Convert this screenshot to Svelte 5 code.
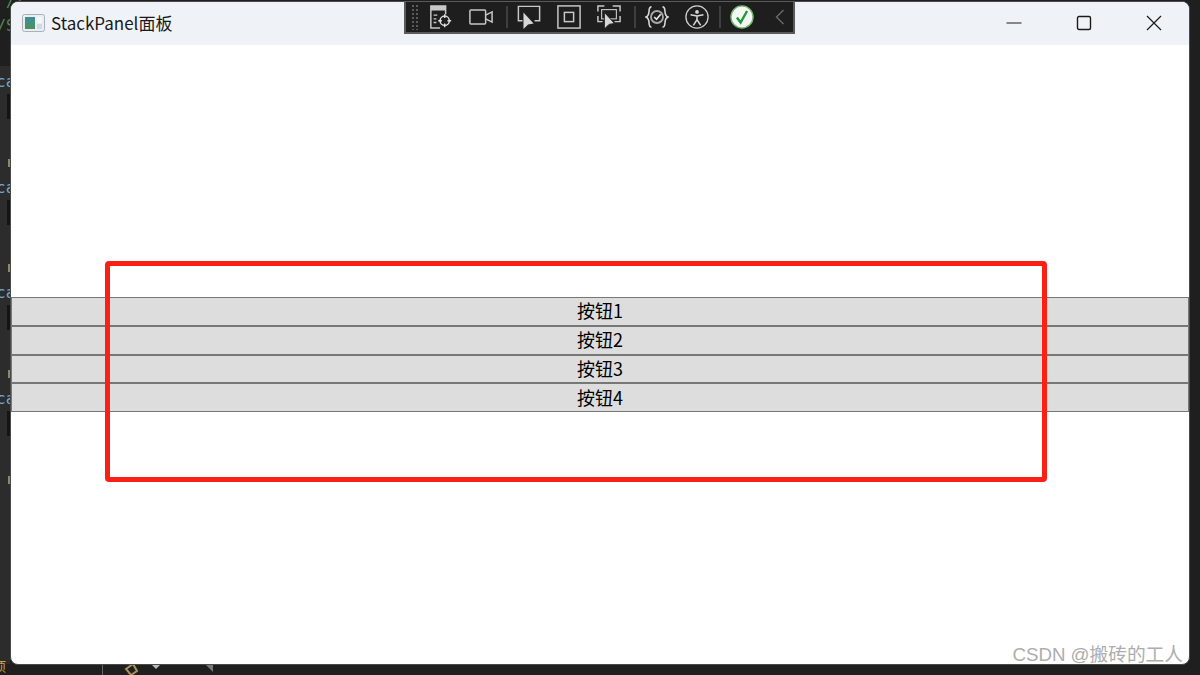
<script>
  const buttons = ['按钮1', '按钮2', '按钮3', '按钮4'];
  // rows of the editor that peeks out behind the window
  const codeRows = [82, 188, 293, 399];
  const markRows = [163, 268, 374, 480];
</script>

<div class="desktop">
  <div class="editor" aria-hidden="true">
    <span class="green g1">//</span>
    <span class="green g2">/S</span>
    {#each codeRows as y}
      <span class="ca" style="top: {y - 9}px">ca</span>
      <span class="bar" style="top: {y + 12}px"></span>
    {/each}
    {#each markRows as y}
      <span class="mark" style="top: {y - 4}px"></span>
    {/each}
    <span class="foot-line"></span>
    <svg class="foot-icon" width="16" height="14" viewBox="0 0 16 14">
      <path d="M2 7 9 2l4 7-6 4z" fill="none" stroke="#a8935c" stroke-width="2" />
    </svg>
    <span class="foot-arrow a1"></span>
    <span class="foot-arrow a2"></span>
    <span class="foot-corner">项</span>
  </div>

  <main class="window">
    <header class="titlebar">
      <div class="title">
        <svg width="24" height="20" viewBox="0 0 24 20">
          <rect x="0.5" y="1.5" width="22" height="17" rx="2" fill="#e8eef2" stroke="#a9b0b8" />
          <rect x="3" y="4" width="10" height="12" fill="#3f8f8c" />
          <rect x="3" y="10" width="10" height="6" fill="#4a8f6a" />
          <rect x="15" y="4" width="5" height="6" fill="#f4f7f8" />
          <rect x="15" y="11" width="5" height="5" fill="#c9dbe4" />
        </svg>
        <span>StackPanel面板</span>
      </div>
      <div class="controls">
        <svg width="16" height="16" viewBox="0 0 16 16"><path d="M0.5 8h15" stroke="#1a1a1a" fill="none" /></svg>
        <svg width="16" height="16" viewBox="0 0 16 16"><rect x="1.5" y="1.5" width="13" height="13" rx="1.5" stroke="#1a1a1a" stroke-width="1.4" fill="none" /></svg>
        <svg width="16" height="16" viewBox="0 0 16 16"><path d="M1 1l14 14M15 1 1 15" stroke="#1a1a1a" stroke-width="1.2" fill="none" /></svg>
      </div>
    </header>

    <section class="content">
      <div class="stack">
        {#each buttons as label}
          <button type="button">{label}</button>
        {/each}
      </div>
    </section>

    <div class="highlight"></div>
    <div class="watermark">CSDN @搬砖的工人</div>
  </main>

  <nav class="toolbar">
    <span class="grip"></span>
    <svg class="tool" viewBox="0 0 26 26">
      <path d="M12 25H2V1h16v9" fill="none" stroke="#c8c8c8" stroke-width="1.6" />
      <path d="M2 1h16v5H2z" fill="#c8c8c8" />
      <path d="M5 11h4M5 15h3M5 19h3" stroke="#c8c8c8" stroke-width="1.5" />
      <circle cx="17" cy="17" r="5" fill="none" stroke="#e0e0e0" stroke-width="1.6" />
      <path d="M17 10v4M17 20v4M10 17h4M20 17h4" stroke="#e0e0e0" stroke-width="1.6" />
    </svg>
    <svg class="tool gap" viewBox="0 0 26 26">
      <rect x="1" y="5.5" width="17" height="15" rx="1" fill="none" stroke="#c8c8c8" stroke-width="1.6" />
      <path d="M18 11l7-3.5v11L18 15" fill="none" stroke="#c8c8c8" stroke-width="1.6" />
    </svg>
    <i class="sep"></i>
    <svg class="tool" viewBox="0 0 26 26">
      <path d="M6 17H1.5V1.5h23V17H19" fill="none" stroke="#c8c8c8" stroke-width="1.6" />
      <path d="M7 8v18l5-5 6-1z" fill="#d6d6d6" />
    </svg>
    <svg class="tool gap" viewBox="0 0 26 26">
      <rect x="1" y="1" width="24" height="24" fill="none" stroke="#c8c8c8" stroke-width="1.6" />
      <rect x="8" y="8" width="10" height="10" fill="none" stroke="#c8c8c8" stroke-width="1.6" />
    </svg>
    <svg class="tool gap" viewBox="0 0 26 26">
      <path d="M1 7V1h7M17 1h8v6M1 12v6h5M25 12v6h-6" fill="none" stroke="#c8c8c8" stroke-width="1.6" />
      <rect x="5" y="5" width="16" height="10" fill="none" stroke="#c8c8c8" stroke-width="1.2" />
      <path d="M8 8v18l5-5 6-1z" fill="#d6d6d6" stroke="#1e1e1e" />
    </svg>
    <i class="sep"></i>
    <svg class="tool" viewBox="0 0 26 26">
      <path d="M7 2C2 2 7 11 1 13c6 2 1 11 6 11M19 2c5 0 0 9 6 11-6 2-1 11-6 11" fill="none" stroke="#d8d8d8" stroke-width="1.7" />
      <circle cx="13" cy="13" r="6.5" fill="none" stroke="#a8a8a8" stroke-width="2" />
      <path d="M10 13l2.5 2.5L17 10" fill="none" stroke="#e6e6e6" stroke-width="1.8" />
    </svg>
    <svg class="tool gap" viewBox="0 0 26 26">
      <circle cx="13" cy="13" r="12" fill="none" stroke="#d0d0d0" stroke-width="1.4" />
      <circle cx="13" cy="7.5" r="2" fill="#d8d8d8" />
      <path d="M6 10.5 13 12l7-1.5M13 12v4M13 16l-4 6M13 16l4 6" fill="none" stroke="#d8d8d8" stroke-width="1.6" />
    </svg>
    <i class="sep last"></i>
    <svg class="tool" viewBox="0 0 26 26">
      <circle cx="13" cy="13" r="12" fill="#f5f7f5" stroke="#6fb56a" stroke-width="1.5" />
      <path d="M7.5 13.5 11.5 19 18.5 6.5" fill="none" stroke="#1f9a33" stroke-width="2.6" />
    </svg>
    <svg class="chev" width="10" height="16" viewBox="0 0 10 16">
      <path d="M8.5 1 1.500 8l7 7" fill="none" stroke="#6a6a6a" stroke-width="1.4" />
    </svg>
  </nav>
</div>

<style>
  :global(body) {
    margin: 0;
    background: #1f1f1f;
  }

  .desktop {
    position: relative;
    width: 1200px;
    height: 675px;
    overflow: hidden;
    background: #1f1f1f;
    font-family: "Noto Sans CJK SC", "Liberation Sans", sans-serif;
    padding: 1px 10px 10px 10px;
    box-sizing: border-box;
    display: flex;
  }

  /* the code editor behind the window */
  .editor {
    position: absolute;
    inset: 0;
  }

  .editor::before {
    content: '';
    position: absolute;
    left: 0;
    top: 66px;
    width: 10px;
    height: 598px;
    background: #2c2c2c;
  }

  .ca {
    position: absolute;
    left: -4px;
    font: 16px "DejaVu Sans Mono", monospace;
    line-height: 18px;
    color: #6fa8d8;
  }

  .bar {
    position: absolute;
    left: 7px;
    width: 3px;
    height: 25px;
    background: #141414;
  }

  .mark {
    position: absolute;
    left: 8px;
    width: 2px;
    height: 8px;
    background: #8a8a6a;
  }

  .green {
    position: absolute;
    font: 15px "DejaVu Sans Mono", monospace;
    color: #4f8f4f;
    line-height: 16px;
  }

  .g1 { left: 6px; top: -6px; }
  .g2 { left: -3px; top: 18px; }

  .foot-line {
    position: absolute;
    left: 102px;
    top: 664px;
    width: 1px;
    height: 11px;
    background: #666;
  }

  .foot-icon {
    position: absolute;
    left: 124px;
    top: 662px;
  }

  .foot-arrow {
    position: absolute;
    top: 664px;
    width: 0;
    height: 0;
  }

  .a1 {
    left: 151px;
    border: 5px solid transparent;
    border-top-color: #bdbdbd;
  }

  .a2 {
    left: 205px;
    border-top: 8px solid #777;
    border-left: 8px solid transparent;
  }

  .foot-corner {
    position: absolute;
    left: -7px;
    top: 658px;
    font-size: 13px;
    line-height: 16px;
    color: #c9a24e;
  }

  .window {
    position: relative;
    flex: 1;
    display: flex;
    flex-direction: column;
    background: #fff;
    border: 1px solid #4a4a4a;
    border-radius: 8px;
    overflow: hidden;
    box-sizing: border-box;
  }

  .titlebar {
    height: 43px;
    flex: none;
    display: flex;
    align-items: center;
    justify-content: space-between;
    padding-bottom: 2px;
    box-sizing: border-box;
    background: #eff3f8;
  }

  .title {
    display: flex;
    align-items: center;
    gap: 5px;
    padding-left: 11px;
    font-size: 17px;
    color: #1a1a1a;
  }

  .controls {
    display: flex;
    gap: 54px;
    padding-right: 27px;
  }

  .content {
    flex: 1;
    display: flex;
    flex-direction: column;
    justify-content: center;
  }

  .stack {
    display: flex;
    flex-direction: column;
  }

  button {
    height: 28.75px;
    padding: 0 0 2px;
    background: #dddddd;
    border: 1px solid #777;
    box-sizing: border-box;
    font: 18px/1 "Noto Sans CJK SC", "Liberation Sans", sans-serif;
    color: #000;
  }

  button + button {
    box-shadow: 0 -1px 0 #777;
  }

  .highlight {
    position: absolute;
    left: 94px;
    top: 259px;
    width: 942px;
    height: 221px;
    box-sizing: border-box;
    border: 5px solid #fb2014;
    border-radius: 4px;
  }

  .watermark {
    position: absolute;
    right: 6px;
    bottom: -2px;
    font-family: "Liberation Sans", "Noto Sans CJK SC", sans-serif;
    font-size: 18.7px;
    line-height: 22px;
    color: #adadad;
    white-space: nowrap;
  }

  .toolbar {
    position: absolute;
    left: 404px;
    top: 1px;
    width: 391px;
    height: 33px;
    box-sizing: border-box;
    background: #1e1e1e;
    border: 2px solid #5a5a5a;
    border-top-width: 1px;
    display: flex;
    align-items: center;
    padding-left: 5px;
  }

  .grip {
    width: 9px;
    height: 26px;
    margin-right: 9px;
    background-image: radial-gradient(#5c5c5c 1px, transparent 1.2px);
    background-size: 4px 4px;
  }

  .tool {
    flex: none;
    width: 24px;
    height: 24px;
  }

  .gap {
    margin-left: 16px;
  }

  .sep {
    width: 2px;
    height: 22px;
    margin: 0 9px 0 13px;
    background: #3f3f3f;
  }

  .sep.last {
    margin-left: 10px;
  }

  .chev {
    margin-left: 21px;
  }
</style>
